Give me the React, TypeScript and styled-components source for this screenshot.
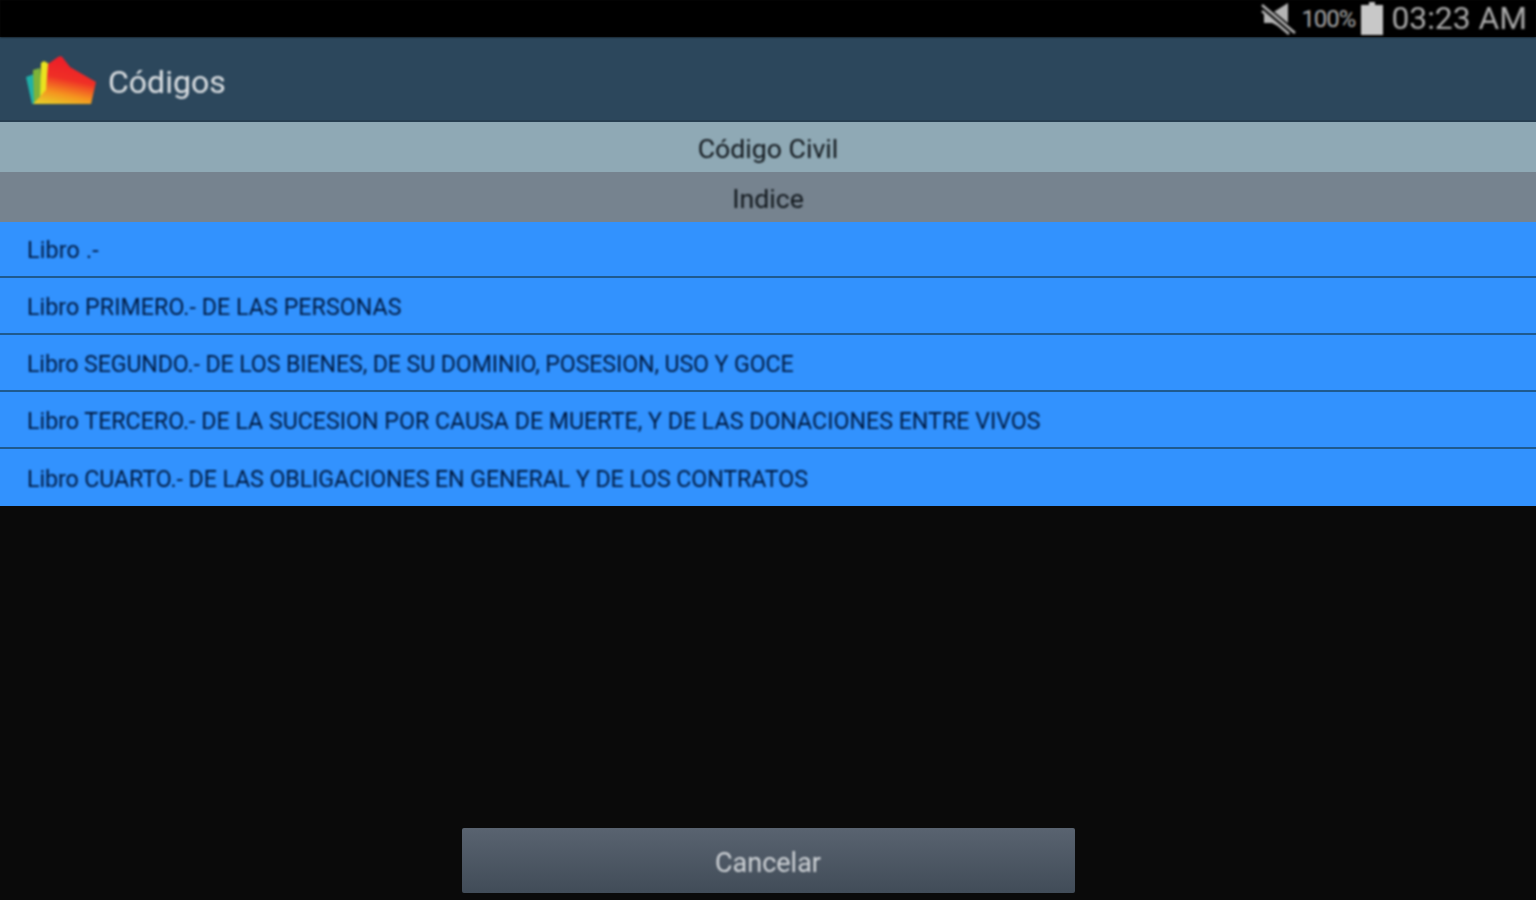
import React from "react";
import styled, { createGlobalStyle } from "styled-components";

const GlobalStyle = createGlobalStyle`
  html, body {
    margin: 0;
    padding: 0;
    background: #0a0a0a;
  }
  body {
    font-family: Roboto, "Liberation Sans", sans-serif;
  }
`;

const Screen = styled.div`
  width: 1536px;
  height: 900px;
  display: flex;
  flex-direction: column;
  overflow: hidden;
  background: #0a0a0a;
`;

const StatusBar = styled.div`
  height: 37px;
  flex: none;
  display: flex;
  align-items: center;
  justify-content: flex-end;
  padding-right: 9px;
  background: #000;
  color: #a9a9a9;
  filter: blur(0.8px);
`;

const StatusPercent = styled.span`
  font-size: 24px;
  letter-spacing: -1px;
  margin: 0 6px 0 4px;
`;

const StatusClock = styled.span`
  font-size: 31.8px;
  margin: 0 0 2px 8px;
`;

const AppBar = styled.div`
  height: 85px;
  flex: none;
  display: flex;
  align-items: center;
  gap: 12px;
  padding: 6px 0 0 26px;
  box-sizing: border-box;
  background: #2c475c;
  border-bottom: 2px solid #263e50;
`;

const AppTitle = styled.span`
  font-size: 32px;
  color: #dde1e4;
  filter: blur(0.8px);
`;

const SectionHeader = styled.div<{ $bg: string }>`
  height: 50px;
  flex: none;
  display: flex;
  align-items: center;
  justify-content: center;
  padding-top: 4px;
  box-sizing: border-box;
  background: ${(p) => p.$bg};
  color: #12181d;
  font-size: 26.7px;
`;

const HeaderText = styled.span`
  filter: blur(0.8px);
`;

const BookList = styled.ul`
  list-style: none;
  margin: 0;
  padding: 0;
  flex: none;
`;

const BookRow = styled.li`
  height: 57px;
  box-sizing: border-box;
  display: flex;
  align-items: center;
  padding: 2px 0 0 27px;
  background: #3292fe;
  color: #001a40;
  font-size: 23.2px;
  border-bottom: 2px solid #1f5a8e;

  &:first-child {
    height: 56px;
  }

  &:last-child {
    border-bottom: none;
  }
`;

const BookText = styled.span<{ $tracking: number }>`
  white-space: pre;
  letter-spacing: ${(p) => p.$tracking}px;
  filter: blur(0.8px);
`;

const Spacer = styled.div`
  flex: 1;
`;

const Footer = styled.div`
  flex: none;
  display: flex;
  justify-content: center;
  padding-bottom: 7px;
`;

const CancelButton = styled.button`
  width: 613px;
  height: 65px;
  padding: 4px 0 0;
  border: none;
  border-radius: 2px;
  background: linear-gradient(#596370, #414c58);
  color: #d0d4d8;
  font-family: inherit;
  font-size: 27px;
`;

const ButtonText = styled.span`
  display: block;
  filter: blur(0.8px);
`;

const books = [
  { title: "Libro .-", tracking: 0.2 },
  { title: "Libro PRIMERO.- DE LAS PERSONAS", tracking: 0.06 },
  { title: "Libro SEGUNDO.- DE LOS BIENES, DE SU DOMINIO, POSESION, USO Y GOCE", tracking: -0.12 },
  { title: "Libro TERCERO.- DE LA SUCESION POR CAUSA DE MUERTE, Y DE LAS DONACIONES ENTRE VIVOS", tracking: 0 },
  { title: "Libro CUARTO.- DE LAS OBLIGACIONES EN GENERAL Y DE LOS CONTRATOS", tracking: -0.08 },
];

const MuteIcon = () => (
  <svg width="36" height="34" viewBox="0 0 36 34">
    <path d="M3 11h8L27 1v28L11 21H3z" fill="#b4b4b4" />
    <path d="M2 5l30 25" stroke="#000" strokeWidth="7" />
    <path d="M1 3l33 28" stroke="#b4b4b4" strokeWidth="2.5" />
    <path d="M1 9l27 23" stroke="#b4b4b4" strokeWidth="2.5" />
  </svg>
);

const BatteryIcon = () => (
  <svg width="22" height="33" viewBox="0 0 22 33">
    <path d="M8 0h6v3h8v30H0V3h8z" fill="#c8c8c8" />
  </svg>
);

const AppLogo = () => (
  <svg width="70" height="52" viewBox="0 0 70 52" style={{ filter: "blur(1px)" }}>
    <defs>
      <linearGradient id="logoFill" x1="0.15" y1="1" x2="0.4" y2="0.1">
        <stop offset="0" stopColor="#e6cf28" />
        <stop offset="0.3" stopColor="#f5941f" />
        <stop offset="0.65" stopColor="#ef2f26" />
        <stop offset="1" stopColor="#ee2028" />
      </linearGradient>
    </defs>
    <path d="M0 21l8-3 4 30H6z" fill="#1fb0a8" />
    <path d="M7 14l7-2 4 36H8z" fill="#7db33a" />
    <path d="M15 7l3-2 5 3 2 40H14z" fill="#e9e21f" />
    <path d="M22 8l10-7c2-1 4-1 5 1l7 9 26 15-5 22H7l13-14z" fill="url(#logoFill)" />
  </svg>
);

export default function App() {
  return (
    <Screen>
      <GlobalStyle />
      <StatusBar>
        <MuteIcon />
        <StatusPercent>100%</StatusPercent>
        <BatteryIcon />
        <StatusClock>03:23 AM</StatusClock>
      </StatusBar>
      <AppBar>
        <AppLogo />
        <AppTitle>Códigos</AppTitle>
      </AppBar>
      <SectionHeader $bg="#8fa9b5">
        <HeaderText>Código Civil</HeaderText>
      </SectionHeader>
      <SectionHeader $bg="#76838f">
        <HeaderText>Indice</HeaderText>
      </SectionHeader>
      <BookList>
        {books.map((book) => (
          <BookRow key={book.title}>
            <BookText $tracking={book.tracking}>{book.title}</BookText>
          </BookRow>
        ))}
      </BookList>
      <Spacer />
      <Footer>
        <CancelButton>
          <ButtonText>Cancelar</ButtonText>
        </CancelButton>
      </Footer>
    </Screen>
  );
}
